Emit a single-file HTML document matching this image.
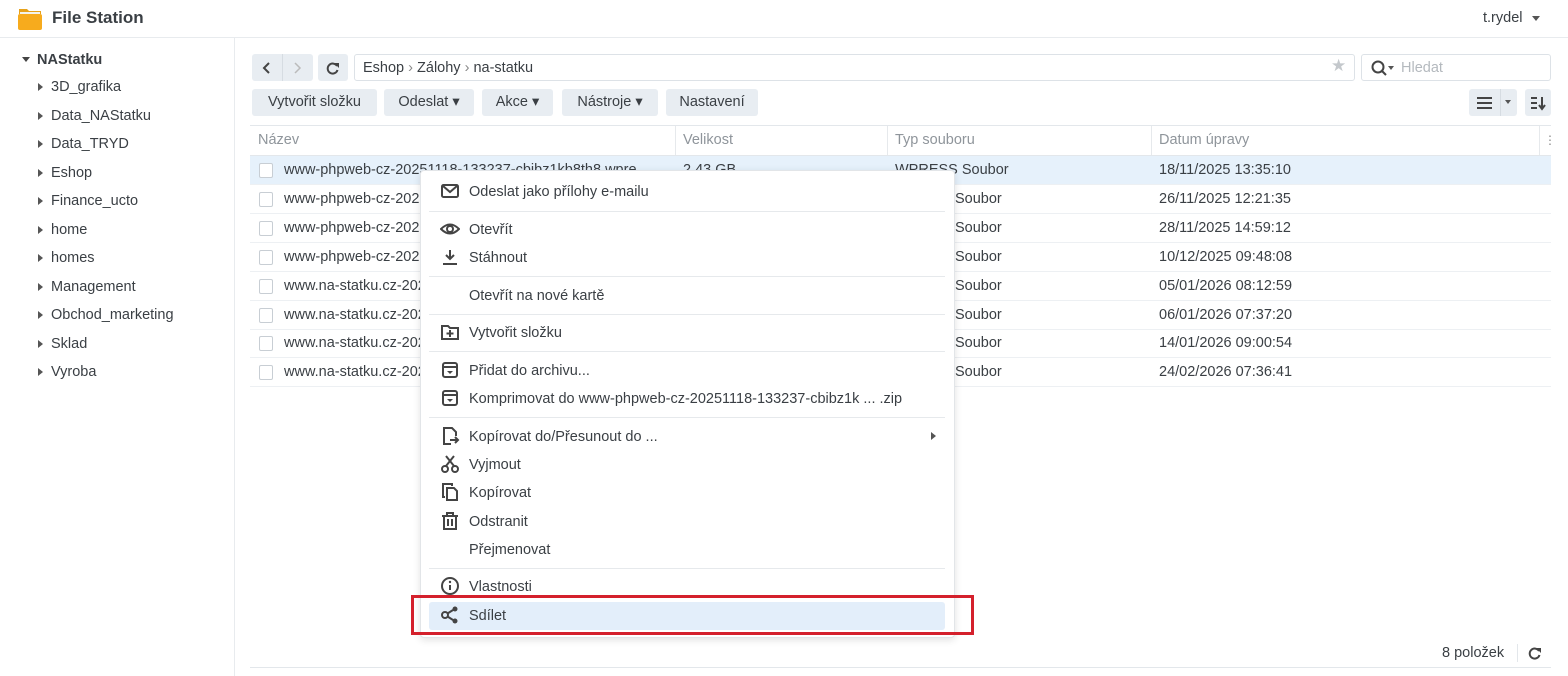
<!DOCTYPE html><html><head><meta charset="utf-8"><style>
*{box-sizing:border-box;margin:0;padding:0}
body{width:1568px;height:676px;overflow:hidden;background:#fff;font-family:"Liberation Sans",sans-serif;color:#3a3f44;font-size:14.5px;position:relative}
.a{position:absolute}
.t{position:absolute;white-space:nowrap;line-height:16px}
.btn{position:absolute;background:#e8edf2;border-radius:3px;height:27px;line-height:27px;text-align:center;font-size:14.5px;color:#3a3f44}
.row{position:absolute;left:250px;width:1301px;height:29px;border-bottom:1px solid #edf0f3}
.cb{position:absolute;left:9px;top:7px;width:14px;height:15px;border:1px solid #c8ced4;border-radius:2px;background:#fff}
.sep{position:absolute;left:429px;width:516px;height:1px;background:#e6e9ec}
.mi{position:absolute;left:469px;font-size:14.5px;line-height:16px;color:#3a3f44;white-space:nowrap}
.ic{position:absolute;left:440px;width:20px;height:20px}
</style></head><body>
<div class="a" style="left:0;top:37px;width:1568px;height:1px;background:#e8ebee"></div>
<svg class="a" style="left:17px;top:5px" width="26" height="26" viewBox="0 0 26 26"><path d="M2 4h8l2 2h12v3H2z" fill="#e7a21a"/><rect x="3" y="7" width="20" height="4" fill="#f3f3ee"/><rect x="1" y="9" width="24" height="16" rx="2" fill="#f7ab1d"/></svg>
<div class="t" style="left:52px;top:10px;font-size:17px;font-weight:bold;color:#3a3f44">File Station</div>
<div class="t" style="left:1483px;top:10px">t.rydel</div>
<div class="a" style="left:1532px;top:16px;border:4px solid transparent;border-top:5px solid #555"></div>
<div class="a" style="left:234px;top:38px;width:1px;height:638px;background:#e8ebee"></div>
<div class="a" style="left:22px;top:57px;border:4px solid transparent;border-top:5px solid #444"></div>
<div class="t" style="left:37px;top:52px;font-weight:bold">NAStatku</div>
<div id="tree"></div>
<div class="btn" style="left:252px;top:54px;width:61px;"></div>
<div class="a" style="left:282px;top:54px;width:1px;height:27px;background:#d6dce2"></div>
<svg class="a" style="left:259px;top:60px" width="16" height="16"><path d="M10 3L5 8l5 5" stroke="#444" stroke-width="2" fill="none"/></svg>
<svg class="a" style="left:289px;top:60px" width="16" height="16"><path d="M6 3l5 5-5 5" stroke="#bbb" stroke-width="1.5" fill="none"/></svg>
<div class="btn" style="left:318px;top:54px;width:30px"></div>
<svg class="a" style="left:325px;top:60px" width="16" height="16"><path d="M12 6A5 5 0 1 0 12.5 10" stroke="#444" stroke-width="2" fill="none"/><path d="M9 3h5v5z" fill="#444"/></svg>
<div class="a" style="left:354px;top:54px;width:1001px;height:27px;border:1px solid #dde2e7;border-radius:3px"></div>
<div class="t" style="left:363px;top:60px">Eshop <span style="color:#888">›</span> Zálohy <span style="color:#888">›</span> na-statku</div>
<div class="t" style="left:1331px;top:58px;color:#c4c8cc;font-size:17px">★</div>
<div class="a" style="left:1361px;top:54px;width:190px;height:27px;border:1px solid #dde2e7;border-radius:3px"></div>
<svg class="a" style="left:1370px;top:59px" width="18" height="18"><circle cx="8" cy="8" r="5.5" stroke="#444" stroke-width="2" fill="none"/><path d="M12 12l4 4" stroke="#444" stroke-width="2"/></svg>
<div class="a" style="left:1388px;top:66px;border:3px solid transparent;border-top:4px solid #555"></div>
<div class="t" style="left:1401px;top:60px;color:#b4b9be">Hledat</div>
<div class="btn" style="left:252px;top:89px;width:125px">Vytvořit složku</div>
<div class="btn" style="left:384px;top:89px;width:90px">Odeslat ▾</div>
<div class="btn" style="left:482px;top:89px;width:71px">Akce ▾</div>
<div class="btn" style="left:562px;top:89px;width:96px">Nástroje ▾</div>
<div class="btn" style="left:666px;top:89px;width:92px">Nastavení</div>
<div class="btn" style="left:1469px;top:89px;width:48px"></div>
<div class="a" style="left:1500px;top:89px;width:1px;height:27px;background:#d6dce2"></div>
<svg class="a" style="left:1476px;top:96px" width="18" height="14"><path d="M1 2h15M1 7h15M1 12h15" stroke="#444" stroke-width="2"/></svg>
<div class="a" style="left:1505px;top:100px;border:3px solid transparent;border-top:4px solid #555"></div>
<div class="btn" style="left:1525px;top:89px;width:26px"></div>
<svg class="a" style="left:1530px;top:95px" width="18" height="16"><path d="M1 3h6M1 8h6M1 13h6" stroke="#444" stroke-width="2"/><path d="M12 2v11M9 10l3 4 3-4" stroke="#444" stroke-width="2" fill="none"/></svg>
<div class="a" style="left:250px;top:125px;width:1301px;height:1px;background:#e3e7eb"></div>
<div class="a" style="left:250px;top:155px;width:1301px;height:1px;background:#e3e7eb"></div>
<div class="t" style="left:258px;top:132px;color:#8f959b">Název</div>
<div class="t" style="left:683px;top:132px;color:#8f959b">Velikost</div>
<div class="t" style="left:895px;top:132px;color:#8f959b">Typ souboru</div>
<div class="t" style="left:1159px;top:132px;color:#8f959b">Datum úpravy</div>
<div class="a" style="left:675px;top:126px;width:1px;height:29px;background:#e6e9ec"></div>
<div class="a" style="left:887px;top:126px;width:1px;height:29px;background:#e6e9ec"></div>
<div class="a" style="left:1151px;top:126px;width:1px;height:29px;background:#e6e9ec"></div>
<div class="a" style="left:1539px;top:126px;width:1px;height:29px;background:#e6e9ec"></div>
<div class="t" style="left:1544px;top:132px;color:#888;font-size:12px">⋮</div>
<div id="rows"></div>
<div class="a" style="left:250px;top:667px;width:1301px;height:1px;background:#e3e7eb"></div>
<div class="t" style="left:1442px;top:645px">8 položek</div>
<div class="a" style="left:1517px;top:644px;width:1px;height:18px;background:#e3e7eb"></div>
<svg class="a" style="left:1527px;top:645px" width="16" height="16"><path d="M12 6A5 5 0 1 0 12.5 10" stroke="#444" stroke-width="2" fill="none"/><path d="M9 3h5v5z" fill="#444"/></svg>
<div class="a" style="left:420px;top:170px;width:535px;height:468px;background:#fff;border:1px solid #e2e5e8;border-radius:4px;box-shadow:0 2px 8px rgba(0,0,0,.12)"></div>
<div class="a" style="left:429px;top:602px;width:516px;height:28px;background:#e3eefa;border-radius:3px"></div>
<div class="a" style="left:411px;top:595px;width:563px;height:40px;border:3px solid #d4202c"></div>
<div class="sep" style="top:211px"></div><div class="sep" style="top:276px"></div><div class="sep" style="top:314px"></div><div class="sep" style="top:351px"></div><div class="sep" style="top:417px"></div><div class="sep" style="top:568px"></div>
<div class="mi" style="top:184px">Odeslat jako přílohy e-mailu</div>
<div class="mi" style="top:222px">Otevřít</div>
<div class="mi" style="top:250px">Stáhnout</div>
<div class="mi" style="top:288px">Otevřít na nové kartě</div>
<div class="mi" style="top:325px">Vytvořit složku</div>
<div class="mi" style="top:363px">Přidat do archivu...</div>
<div class="mi" style="top:391px">Komprimovat do www-phpweb-cz-20251118-133237-cbibz1k ... .zip</div>
<div class="mi" style="top:429px">Kopírovat do/Přesunout do ...</div>
<div class="a" style="left:931px;top:432px;border:4px solid transparent;border-left:5px solid #555;border-right:0"></div>
<div class="mi" style="top:457px">Vyjmout</div>
<div class="mi" style="top:485px">Kopírovat</div>
<div class="mi" style="top:514px">Odstranit</div>
<div class="mi" style="top:542px">Přejmenovat</div>
<div class="mi" style="top:579px">Vlastnosti</div>
<div class="mi" style="top:608px">Sdílet</div>
<svg class="ic" style="top:181px" viewBox="0 0 20 20"><rect x="2" y="4" width="16" height="12" rx="1.5" stroke="#444" stroke-width="2" fill="none"/><path d="M3 5l7 6 7-6" stroke="#444" stroke-width="2" fill="none"/></svg>
<svg class="ic" style="top:219px" viewBox="0 0 20 20"><path d="M1 10Q10 1 19 10Q10 19 1 10z" stroke="#444" stroke-width="2" fill="none"/><circle cx="10" cy="10" r="3" stroke="#444" stroke-width="2" fill="none"/></svg>
<svg class="ic" style="top:247px" viewBox="0 0 20 20"><path d="M10 3v9M6 8l4 4 4-4" stroke="#444" stroke-width="2" fill="none"/><path d="M3 17h14" stroke="#444" stroke-width="2"/></svg>
<svg class="ic" style="top:322px" viewBox="0 0 20 20"><path d="M2 4h6l2 2h8v11H2z" stroke="#444" stroke-width="2" fill="none"/><path d="M10 8v7M6.5 11.5h7" stroke="#444" stroke-width="2"/></svg>
<svg class="ic" style="top:360px" viewBox="0 0 20 20"><rect x="3" y="3" width="14" height="14" rx="2" stroke="#444" stroke-width="2" fill="none"/><path d="M3 7h14" stroke="#444" stroke-width="2"/><path d="M7 11l3 3 3-3z" fill="#444"/></svg>
<svg class="ic" style="top:388px" viewBox="0 0 20 20"><rect x="3" y="3" width="14" height="14" rx="2" stroke="#444" stroke-width="2" fill="none"/><path d="M3 7h14" stroke="#444" stroke-width="2"/><path d="M7 11l3 3 3-3z" fill="#444"/></svg>
<svg class="ic" style="top:426px" viewBox="0 0 20 20"><path d="M11 18H4V2h8l4 4v4" stroke="#444" stroke-width="2" fill="none"/><path d="M10 14h8M15 11l3 3-3 3" stroke="#444" stroke-width="2" fill="none"/></svg>
<svg class="ic" style="top:454px" viewBox="0 0 20 20"><circle cx="5" cy="15" r="3" stroke="#444" stroke-width="2" fill="none"/><circle cx="15" cy="15" r="3" stroke="#444" stroke-width="2" fill="none"/><path d="M6 12L14 2M14 12L6 2" stroke="#444" stroke-width="2"/></svg>
<svg class="ic" style="top:482px" viewBox="0 0 20 20"><path d="M5 15H3V2h9v2" stroke="#444" stroke-width="2" fill="none"/><path d="M7 6h7l3 3v9H7z" stroke="#444" stroke-width="2" fill="none"/></svg>
<svg class="ic" style="top:511px" viewBox="0 0 20 20"><path d="M2 5h16M7 5V2h6v3" stroke="#444" stroke-width="2" fill="none"/><path d="M4 5v13h12V5M8 8v7M12 8v7" stroke="#444" stroke-width="2" fill="none"/></svg>
<svg class="ic" style="top:576px" viewBox="0 0 20 20"><circle cx="10" cy="10" r="8" stroke="#444" stroke-width="2" fill="none"/><path d="M10 9v5" stroke="#444" stroke-width="2"/><circle cx="10" cy="6" r="1.2" fill="#444"/></svg>
<svg class="ic" style="top:605px" viewBox="0 0 20 20"><circle cx="5" cy="10" r="3" stroke="#444" stroke-width="2" fill="none"/><circle cx="15" cy="4" r="2.5" fill="#444"/><circle cx="15" cy="16" r="2.5" fill="#444"/><path d="M7.5 8.5L13 5M7.5 11.5L13 15" stroke="#444" stroke-width="2"/></svg>
<script>
var tr=["3D_grafika","Data_NAStatku","Data_TRYD","Eshop","Finance_ucto","home","homes","Management","Obchod_marketing","Sklad","Vyroba"],h="";
tr.forEach(function(n,i){var y=87+i*28.5;h+='<div class="a" style="left:38px;top:'+(y-4)+'px;border:4px solid transparent;border-left:5px solid #555;border-right:0"></div><div class="t" style="left:51px;top:'+(y-8)+'px">'+n+'</div>';});
document.getElementById("tree").innerHTML=h;
var r=[["www-phpweb-cz-20251118-133237-cbibz1kb8th8.wpre","2.43 GB","WPRESS Soubor","18/11/2025 13:35:10"],["www-phpweb-cz-2025","","Soubor","26/11/2025 12:21:35"],["www-phpweb-cz-2025","","Soubor","28/11/2025 14:59:12"],["www-phpweb-cz-2025","","Soubor","10/12/2025 09:48:08"],["www.na-statku.cz-2026","","Soubor","05/01/2026 08:12:59"],["www.na-statku.cz-2026","","Soubor","06/01/2026 07:37:20"],["www.na-statku.cz-2026","","Soubor","14/01/2026 09:00:54"],["www.na-statku.cz-2026","","Soubor","24/02/2026 07:36:41"]];h="";
r.forEach(function(d,i){var y=156+i*28.9;h+='<div class="row" style="top:'+y+'px;'+(i==0?'background:#e6f1fb':'')+'"><div class="cb"></div><div class="t" style="left:34px;top:6px">'+d[0]+'</div><div class="t" style="left:433px;top:6px">'+d[1]+'</div><div class="t" style="left:'+(i==0?645:705)+'px;top:6px">'+d[2]+'</div><div class="t" style="left:909px;top:6px">'+d[3]+'</div></div>';});
document.getElementById("rows").innerHTML=h;
</script>
</body></html>
